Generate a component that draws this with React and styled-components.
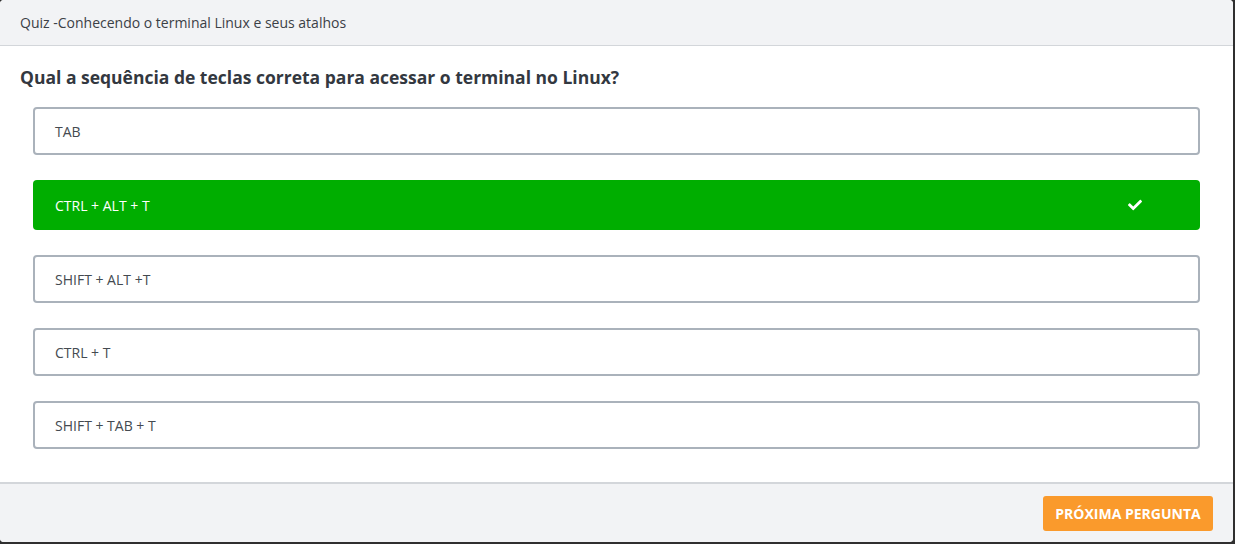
import React from "react";
import styled, { createGlobalStyle } from "styled-components";
import { FaCheck } from "react-icons/fa";

const Global = createGlobalStyle`
  html, body { margin: 0; padding: 0; background: #2f2f2f; }
  body { font-family: "Open Sans", "Liberation Sans", sans-serif; }
  * { box-sizing: border-box; }
`;

const Modal = styled.div`
  width: 1233px;
  height: 542px;
  background: #fff;
  border-radius: 4px;
  overflow: hidden;
  display: flex;
  flex-direction: column;
`;

const Header = styled.header`
  height: 46px;
  flex: none;
  background: #f2f3f5;
  border-bottom: 1px solid #d3d6da;
  display: flex;
  align-items: center;
  padding: 0 20px 1px;
  font-size: 14px;
  color: #3b4046;
`;

const Body = styled.main`
  flex: 1;
  padding: 20px 0 0;
`;

const Question = styled.h2`
  margin: 0 0 19px;
  padding: 0 20px;
  font-size: 17.5px;
  line-height: 22px;
  font-weight: 700;
  color: #333840;
`;

const Options = styled.div`
  display: flex;
  flex-direction: column;
  gap: 25px;
  padding: 0 33px;
`;

const Option = styled.div`
  height: ${(p) => (p.$correct ? "50px" : "48px")};
  border-radius: 4px;
  border: ${(p) => (p.$correct ? "none" : "2px solid #aab2bb")};
  background: ${(p) => (p.$correct ? "#00ae00" : "#fff")};
  color: ${(p) => (p.$correct ? "#fff" : "#444a50")};
  font-weight: ${(p) => (p.$correct ? 500 : 400)};
  font-size: 14px;
  display: flex;
  align-items: center;
  justify-content: space-between;
  padding: ${(p) => (p.$correct ? "0 58px 0 22px" : "0 20px")};
`;

const Footer = styled.footer`
  height: 60px;
  flex: none;
  background: #f2f3f5;
  border-top: 2px solid #d3d6da;
  display: flex;
  justify-content: flex-end;
  align-items: flex-start;
  padding: 12px 20px 0;
`;

const NextButton = styled.button`
  width: 170px;
  height: 35px;
  border: none;
  border-radius: 3px;
  background: #fa9a2c;
  color: #fff;
  font-family: "Open Sans", "Liberation Sans", sans-serif;
  font-weight: 700;
  font-size: 14px;
  text-transform: uppercase;
  cursor: pointer;
`;

const options = [
  { text: "TAB" },
  { text: "CTRL + ALT + T", correct: true },
  { text: "SHIFT + ALT +T" },
  { text: "CTRL + T" },
  { text: "SHIFT + TAB + T" },
];

export default function App() {
  return (
    <>
      <Global />
      <Modal>
        <Header>Quiz -Conhecendo o terminal Linux e seus atalhos</Header>
        <Body>
          <Question>Qual a sequência de teclas correta para acessar o terminal no Linux?</Question>
          <Options>
            {options.map((o) => (
              <Option key={o.text} $correct={o.correct}>
                <span>{o.text}</span>
                {o.correct && <FaCheck size={14} />}
              </Option>
            ))}
          </Options>
        </Body>
        <Footer>
          <NextButton>Próxima pergunta</NextButton>
        </Footer>
      </Modal>
    </>
  );
}
